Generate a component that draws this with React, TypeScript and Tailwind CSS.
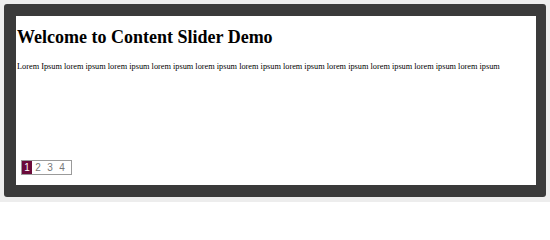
import * as React from "react";

const pages = [1, 2, 3, 4];

export default function App() {
  const [active, setActive] = React.useState(1);

  return (
    <div className="w-[550px] h-[202px] bg-[#ededed] p-[4px]">
      {/* dark slider frame */}
      <div className="h-[193px] w-[542px] rounded-[3px] bg-[#3a3a3a] pl-[12px] pr-[10px] py-[12px]">
        <div className="h-full bg-white flex flex-col px-[1px] pb-[10px] font-['Liberation_Serif',serif] text-black">
          <h1 className="mt-[11px] text-[18px] font-bold leading-[21px]">
            Welcome to Content Slider Demo
          </h1>
          <p className="mt-[13px] text-[8.3px] leading-[11px] whitespace-nowrap">
            Lorem Ipsum lorem ipsum lorem ipsum lorem ipsum lorem ipsum lorem ipsum lorem ipsum
            lorem ipsum lorem ipsum lorem ipsum lorem ipsum
          </p>

          {/* pager */}
          <div className="mt-auto ml-[4px] flex self-start border border-[#9a9a9a] bg-white pr-[3px]">
            {pages.map((n) => (
              <button
                key={n}
                onClick={() => setActive(n)}
                className={
                  n === active
                    ? "h-[13px] w-[10px] bg-[#6b0a3a] text-white text-[10px] leading-[13px] font-['Liberation_Sans',sans-serif] text-center"
                    : "h-[13px] w-[12px] text-[#777] text-[10px] leading-[13px] font-['Liberation_Sans',sans-serif] text-center"
                }
              >
                {n}
              </button>
            ))}
          </div>
        </div>
      </div>
    </div>
  );
}
